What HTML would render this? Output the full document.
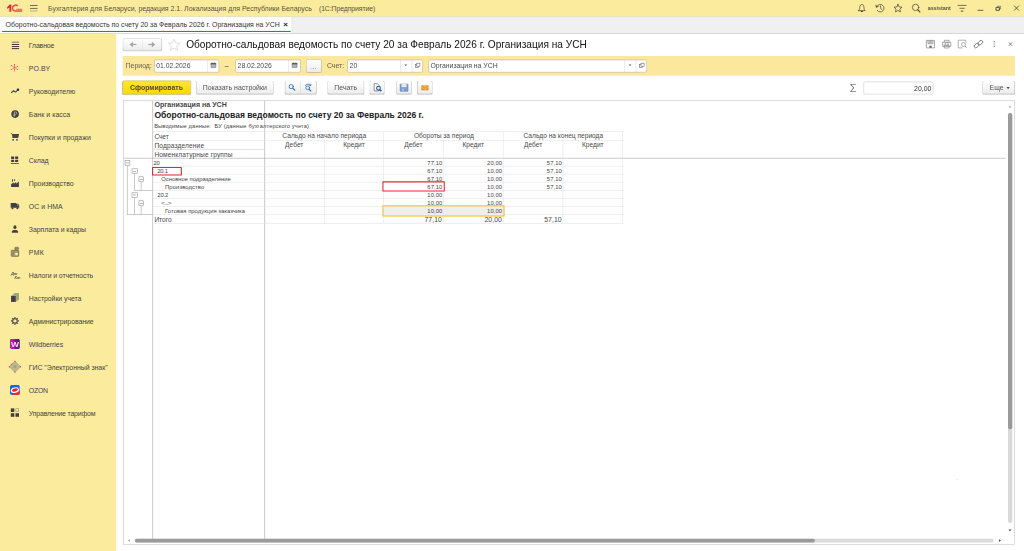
<!DOCTYPE html>
<html><head><meta charset="utf-8"><title>1C</title><style>
*{box-sizing:border-box;margin:0;padding:0}
html,body{width:1024px;height:551px;overflow:hidden;background:#fff}
#root{position:absolute;left:0;top:0;width:1920px;height:1034px;transform:scale(0.533333);transform-origin:0 0;font-family:"Liberation Sans",sans-serif;font-size:13px;color:#333;overflow:hidden}
.a{position:absolute;white-space:nowrap}
svg{position:absolute;overflow:visible}
.btn{border:1px solid #a2a2a2;border-bottom-color:#8e8e8e;border-radius:3px;background:linear-gradient(#ffffff,#ececec);box-shadow:0 1px 1px rgba(0,0,0,.22)}
.inp{border:1px solid #b3ab8c;border-radius:3px;background:#fff}
.sep{background:#d6d6d6}
.vl{background:#e1e1e1}
.hl{background:#e2e2e2}
.tl{background:#9a9a9a}
.tb{border:1px solid #8a8a8a;background:#fff}
</style></head><body><div id="root"><div class="a " style="left:0px;top:0px;width:1920px;height:31px;background:#FBEB9C"></div>
<div class="a" style="left:90px;top:7.77px;font-size:13px;line-height:17px;color:#5a5540;letter-spacing:0.019px;">Бухгалтерия для Беларуси, редакция 2.1. Локализация для Республики Беларусь</div>
<div class="a" style="left:598px;top:7.77px;font-size:13px;line-height:17px;color:#5a5540;letter-spacing:-0.217px;">(1С:Предприятие)</div>
<div class="a " style="left:0px;top:31px;width:1920px;height:32px;background:#f0f0f0;border-bottom:1px solid #bdbdbd;border-top:1px solid #d9d3ad"></div>
<div class="a " style="left:0px;top:32px;width:547.5px;height:30px;background:#fff;border-right:1px solid #d0d0d0"></div>
<div class="a " style="left:4px;top:58px;width:540.5px;height:2px;background:#0a9c4a"></div>
<div class="a" style="left:10.5px;top:37.77px;font-size:13px;line-height:17px;color:#333;">Оборотно-сальдовая ведомость по счету 20 за Февраль 2026 г. Организация на УСН</div>
<div class="a" style="left:531px;top:36.11px;font-size:15px;line-height:20px;color:#222;font-weight:bold;">×</div>
<div class="a " style="left:0px;top:64px;width:217.5px;height:971px;background:#FBEB9C"></div>
<div class="a" style="left:54px;top:76.59px;font-size:13px;line-height:17px;color:#454545;letter-spacing:-0.279px;">Главное</div>
<div class="a" style="left:54px;top:119.71px;font-size:13px;line-height:17px;color:#454545;letter-spacing:0.097px;">PO.BY</div>
<div class="a" style="left:54px;top:162.84px;font-size:13px;line-height:17px;color:#454545;letter-spacing:0.025px;">Руководителю</div>
<div class="a" style="left:54px;top:205.96px;font-size:13px;line-height:17px;color:#454545;letter-spacing:0.098px;">Банк и касса</div>
<div class="a" style="left:54px;top:249.09px;font-size:13px;line-height:17px;color:#454545;letter-spacing:0.055px;">Покупки и продажи</div>
<div class="a" style="left:54px;top:292.21px;font-size:13px;line-height:17px;color:#454545;letter-spacing:-0.172px;">Склад</div>
<div class="a" style="left:54px;top:335.34px;font-size:13px;line-height:17px;color:#454545;letter-spacing:-0.069px;">Производство</div>
<div class="a" style="left:54px;top:378.46px;font-size:13px;line-height:17px;color:#454545;letter-spacing:0.098px;">ОС и НМА</div>
<div class="a" style="left:54px;top:421.59px;font-size:13px;line-height:17px;color:#454545;letter-spacing:-0.089px;">Зарплата и кадры</div>
<div class="a" style="left:54px;top:464.71px;font-size:13px;line-height:17px;color:#454545;letter-spacing:0.599px;">РМК</div>
<div class="a" style="left:54px;top:507.84px;font-size:13px;line-height:17px;color:#454545;letter-spacing:-0.198px;">Налоги и отчетность</div>
<div class="a" style="left:54px;top:550.96px;font-size:13px;line-height:17px;color:#454545;letter-spacing:-0.132px;">Настройки учета</div>
<div class="a" style="left:54px;top:594.09px;font-size:13px;line-height:17px;color:#454545;letter-spacing:-0.154px;">Администрирование</div>
<div class="a" style="left:54px;top:637.21px;font-size:13px;line-height:17px;color:#454545;letter-spacing:-0.070px;">Wildberries</div>
<div class="a" style="left:54px;top:680.34px;font-size:13px;line-height:17px;color:#454545;letter-spacing:-0.070px;">ГИС "Электронный знак"</div>
<div class="a" style="left:54px;top:723.46px;font-size:13px;line-height:17px;color:#454545;letter-spacing:-0.455px;">OZON</div>
<div class="a" style="left:54px;top:766.59px;font-size:13px;line-height:17px;color:#454545;letter-spacing:-0.307px;">Управление тарифом</div>
<div class="a btn" style="left:230px;top:72px;width:73.5px;height:22.5px;"></div>
<div class="a sep" style="left:266.5px;top:73.5px;width:1.5px;height:19px;"></div>
<div class="a" style="left:349px;top:71.34px;font-size:19px;line-height:25px;color:#111;">Оборотно-сальдовая ведомость по счету 20 за Февраль 2026 г. Организация на УСН</div>
<div class="a " style="left:230px;top:104.5px;width:1672.5px;height:37.5px;background:#FBE89C"></div>
<div class="a" style="left:235.5px;top:115.40px;font-size:13px;line-height:17px;color:#66624e;">Период:</div>
<div class="a inp" style="left:289px;top:111.5px;width:122px;height:24.5px;"></div>
<div class="a sep" style="left:388px;top:113px;width:1px;height:21.5px;"></div>
<div class="a" style="left:293px;top:115.40px;font-size:12.8px;line-height:17px;color:#4a4a4a;">01.02.2026</div>
<div class="a" style="left:421.5px;top:114.65px;font-size:13px;line-height:17px;color:#333;">–</div>
<div class="a inp" style="left:441px;top:111.5px;width:122.5px;height:24.5px;"></div>
<div class="a sep" style="left:541px;top:113px;width:1px;height:21.5px;"></div>
<div class="a" style="left:445.5px;top:115.40px;font-size:12.8px;line-height:17px;color:#4a4a4a;">28.02.2026</div>
<div class="a btn" style="left:574px;top:111px;width:29px;height:25px;border:1px dotted #8f7f88"></div>
<div class="a" style="left:583px;top:117.27px;font-size:13px;line-height:17px;color:#8a8a8a;">...</div>
<div class="a" style="left:613px;top:115.40px;font-size:13px;line-height:17px;color:#66624e;">Счет:</div>
<div class="a inp" style="left:651px;top:111.5px;width:141.5px;height:24.5px;"></div>
<div class="a sep" style="left:750px;top:113px;width:1px;height:21.5px;"></div>
<div class="a sep" style="left:771.5px;top:113px;width:1px;height:21.5px;"></div>
<div class="a" style="left:655.5px;top:115.40px;font-size:12.8px;line-height:17px;color:#4a4a4a;">20</div>
<div class="a inp" style="left:803px;top:111.5px;width:410px;height:24.5px;"></div>
<div class="a sep" style="left:1170.5px;top:113px;width:1px;height:21.5px;"></div>
<div class="a sep" style="left:1191.5px;top:113px;width:1px;height:21.5px;"></div>
<div class="a" style="left:807px;top:115.40px;font-size:12.9px;line-height:17px;color:#4a4a4a;">Организация на УСН</div>
<div class="a " style="left:230px;top:151px;width:127.5px;height:26px;border:1px solid #c9a800;border-radius:3px;background:linear-gradient(#ffe72e,#fad800);box-shadow:0 1px 1.5px rgba(0,0,0,.3)"></div>
<div class="a" style="left:230px;top:156.09px;font-size:13px;line-height:17px;color:#54482a;font-weight:bold;width:127px;text-align:center;letter-spacing:0.014px;">Сформировать</div>
<div class="a btn" style="left:367.5px;top:151px;width:145.5px;height:26px;"></div>
<div class="a" style="left:367.5px;top:156.09px;font-size:13px;line-height:17px;color:#555;width:145.5px;text-align:center;">Показать настройки</div>
<div class="a btn" style="left:533.5px;top:151px;width:60px;height:26px;"></div>
<div class="a sep" style="left:563px;top:152.5px;width:1px;height:23px;"></div>
<div class="a btn" style="left:613.5px;top:151px;width:69.5px;height:26px;"></div>
<div class="a" style="left:613.5px;top:156.09px;font-size:13px;line-height:17px;color:#555;width:69.5px;text-align:center;">Печать</div>
<div class="a btn" style="left:692.5px;top:151px;width:28.5px;height:26px;"></div>
<div class="a btn" style="left:743px;top:151px;width:29px;height:26px;"></div>
<div class="a btn" style="left:782px;top:151px;width:29px;height:26px;"></div>
<div class="a" style="left:1593.5px;top:151.92px;font-size:20.5px;line-height:27px;color:#7a7a7a;">Σ</div>
<div class="a inp" style="left:1619px;top:153px;width:130.5px;height:24px;border-color:#c4c4c4"></div>
<div class="a" style="left:1619px;top:156.65px;font-size:13px;line-height:17px;color:#333;width:127.5px;text-align:right;">20,00</div>
<div class="a btn" style="left:1842px;top:151px;width:60.5px;height:26px;"></div>
<div class="a" style="left:1855.5px;top:156.27px;font-size:13px;line-height:17px;color:#555;">Еще</div>
<svg style="left:1887.19px;top:162.75px" width="6.38" height="4.50" viewBox="0 0 3.4 2.4"><path d="M0 0h3.4L1.7 2.2z" fill="#555"/></svg>
<div class="a " style="left:230.5px;top:188px;width:1672.5px;height:833px;border:1px solid #bdbdbd;background:#fff"></div>
<div class="a " style="left:285.5px;top:189px;width:1px;height:821.5px;background:#9c9c9c"></div>
<div class="a " style="left:495.5px;top:189px;width:1px;height:821.5px;background:#9c9c9c"></div>
<div class="a " style="left:232px;top:296px;width:1654px;height:1px;background:#9c9c9c"></div>
<div class="a" style="left:289.5px;top:188.34px;font-size:13.3px;line-height:17px;color:#484848;font-weight:bold;">Организация на УСН</div>
<div class="a" style="left:289.5px;top:205.12px;font-size:16px;line-height:21px;color:#222;font-weight:bold;">Оборотно-сальдовая ведомость по счету 20 за Февраль 2026 г.</div>
<div class="a" style="left:289px;top:229.37px;font-size:10.7px;line-height:14px;color:#444;letter-spacing:0.244px;">Выводимые данные:&nbsp; БУ (данные бухгалтерского учета)</div>
<div class="a hl" style="left:286.5px;top:246px;width:882px;height:1px;"></div>
<div class="a hl" style="left:286.5px;top:262.5px;width:882px;height:1px;"></div>
<div class="a hl" style="left:286.5px;top:279px;width:209px;height:1.5px;"></div>
<div class="a vl" style="left:608px;top:263px;width:1px;height:156px;"></div>
<div class="a vl" style="left:718.5px;top:246.5px;width:1px;height:172.5px;"></div>
<div class="a vl" style="left:830.5px;top:263px;width:1px;height:156px;"></div>
<div class="a vl" style="left:943px;top:246.5px;width:1px;height:172.5px;"></div>
<div class="a vl" style="left:1055px;top:263px;width:1px;height:156px;"></div>
<div class="a vl" style="left:1167px;top:246.5px;width:1px;height:172.5px;"></div>
<div class="a" style="left:289.5px;top:247.89px;font-size:12.4px;line-height:16px;color:#4a4a4a;letter-spacing:-0.178px;">Счет</div>
<div class="a" style="left:289.5px;top:265.14px;font-size:12.4px;line-height:16px;color:#4a4a4a;letter-spacing:0.235px;">Подразделение</div>
<div class="a" style="left:289.5px;top:282.02px;font-size:12.4px;line-height:16px;color:#4a4a4a;letter-spacing:0.210px;">Номенклатурные группы</div>
<div class="a" style="left:496.5px;top:246.58px;font-size:12.4px;line-height:16px;color:#4a4a4a;width:223px;text-align:center;">Сальдо на начало периода</div>
<div class="a" style="left:720px;top:246.58px;font-size:12.4px;line-height:16px;color:#4a4a4a;width:224.5px;text-align:center;">Обороты за период</div>
<div class="a" style="left:944px;top:246.58px;font-size:12.4px;line-height:16px;color:#4a4a4a;width:224.5px;text-align:center;">Сальдо на конец периода</div>
<div class="a" style="left:495.5px;top:264.21px;font-size:12.4px;line-height:16px;color:#4a4a4a;width:112.5px;text-align:center;">Дебет</div>
<div class="a" style="left:608.5px;top:264.21px;font-size:12.4px;line-height:16px;color:#4a4a4a;width:110.5px;text-align:center;">Кредит</div>
<div class="a" style="left:719px;top:264.21px;font-size:12.4px;line-height:16px;color:#4a4a4a;width:112px;text-align:center;">Дебет</div>
<div class="a" style="left:831px;top:264.21px;font-size:12.4px;line-height:16px;color:#4a4a4a;width:112.5px;text-align:center;">Кредит</div>
<div class="a" style="left:943.5px;top:264.21px;font-size:12.4px;line-height:16px;color:#4a4a4a;width:112px;text-align:center;">Дебет</div>
<div class="a" style="left:1055.5px;top:264.21px;font-size:12.4px;line-height:16px;color:#4a4a4a;width:112px;text-align:center;">Кредит</div>
<div class="a hl" style="left:286.5px;top:311px;width:882px;height:1px;"></div>
<div class="a hl" style="left:286.5px;top:326px;width:882px;height:1px;"></div>
<div class="a hl" style="left:286.5px;top:341px;width:882px;height:1px;"></div>
<div class="a hl" style="left:286.5px;top:356.5px;width:882px;height:1px;"></div>
<div class="a hl" style="left:286.5px;top:371.5px;width:882px;height:1px;"></div>
<div class="a hl" style="left:286.5px;top:386.5px;width:882px;height:1px;"></div>
<div class="a hl" style="left:286.5px;top:401.5px;width:882px;height:1px;"></div>
<div class="a hl" style="left:286.5px;top:418.5px;width:882px;height:1px;"></div>
<div class="a " style="left:717px;top:385px;width:229px;height:21px;background:#eeeeee;border:2px solid #f7c41c"></div>
<div class="a " style="left:717px;top:340px;width:116.5px;height:19px;border:2px solid #e6262e;border-radius:1px;background:#fff"></div>
<div class="a" style="left:288px;top:298.38px;font-size:11px;line-height:14px;color:#444;letter-spacing:-0.517px;">20</div>
<div class="a" style="left:719px;top:298.38px;font-size:11px;line-height:14px;color:#444;width:110.5px;text-align:right;letter-spacing:.15px;">77,10</div>
<div class="a" style="left:831px;top:298.38px;font-size:11px;line-height:14px;color:#444;width:110.5px;text-align:right;letter-spacing:.15px;">20,00</div>
<div class="a" style="left:943.5px;top:298.38px;font-size:11px;line-height:14px;color:#444;width:110px;text-align:right;letter-spacing:.15px;">57,10</div>
<div class="a" style="left:295px;top:313.38px;font-size:11px;line-height:14px;color:#444;letter-spacing:-0.512px;">20.1</div>
<div class="a" style="left:719px;top:313.38px;font-size:11px;line-height:14px;color:#444;width:110.5px;text-align:right;letter-spacing:.15px;">67,10</div>
<div class="a" style="left:831px;top:313.38px;font-size:11px;line-height:14px;color:#444;width:110.5px;text-align:right;letter-spacing:.15px;">10,00</div>
<div class="a" style="left:943.5px;top:313.38px;font-size:11px;line-height:14px;color:#444;width:110px;text-align:right;letter-spacing:.15px;">57,10</div>
<div class="a" style="left:302.5px;top:328.38px;font-size:11px;line-height:14px;color:#444;letter-spacing:-0.065px;">Основное подразделение</div>
<div class="a" style="left:719px;top:328.38px;font-size:11px;line-height:14px;color:#444;width:110.5px;text-align:right;letter-spacing:.15px;">67,10</div>
<div class="a" style="left:831px;top:328.38px;font-size:11px;line-height:14px;color:#444;width:110.5px;text-align:right;letter-spacing:.15px;">10,00</div>
<div class="a" style="left:943.5px;top:328.38px;font-size:11px;line-height:14px;color:#444;width:110px;text-align:right;letter-spacing:.15px;">57,10</div>
<div class="a" style="left:309.5px;top:343.38px;font-size:11px;line-height:14px;color:#444;letter-spacing:0.145px;">Производство</div>
<div class="a" style="left:719px;top:343.38px;font-size:11px;line-height:14px;color:#444;width:110.5px;text-align:right;letter-spacing:.15px;">67,10</div>
<div class="a" style="left:831px;top:343.38px;font-size:11px;line-height:14px;color:#444;width:110.5px;text-align:right;letter-spacing:.15px;">10,00</div>
<div class="a" style="left:943.5px;top:343.38px;font-size:11px;line-height:14px;color:#444;width:110px;text-align:right;letter-spacing:.15px;">57,10</div>
<div class="a" style="left:295px;top:358.56px;font-size:11px;line-height:14px;color:#444;letter-spacing:-0.324px;">20.2</div>
<div class="a" style="left:719px;top:358.56px;font-size:11px;line-height:14px;color:#444;width:110.5px;text-align:right;letter-spacing:.15px;">10,00</div>
<div class="a" style="left:831px;top:358.56px;font-size:11px;line-height:14px;color:#444;width:110.5px;text-align:right;letter-spacing:.15px;">10,00</div>
<div class="a" style="left:302.5px;top:373.56px;font-size:11px;line-height:14px;color:#444;letter-spacing:-0.723px;">&lt;...&gt;</div>
<div class="a" style="left:719px;top:373.56px;font-size:11px;line-height:14px;color:#444;width:110.5px;text-align:right;letter-spacing:.15px;">10,00</div>
<div class="a" style="left:831px;top:373.56px;font-size:11px;line-height:14px;color:#444;width:110.5px;text-align:right;letter-spacing:.15px;">10,00</div>
<div class="a" style="left:309.5px;top:388.56px;font-size:11px;line-height:14px;color:#444;letter-spacing:0.036px;">Готовая продукция заказчика</div>
<div class="a" style="left:719px;top:388.56px;font-size:11px;line-height:14px;color:#444;width:110.5px;text-align:right;letter-spacing:.15px;">10,00</div>
<div class="a" style="left:831px;top:388.56px;font-size:11px;line-height:14px;color:#444;width:110.5px;text-align:right;letter-spacing:.15px;">10,00</div>
<div class="a" style="left:289.5px;top:403.52px;font-size:12.4px;line-height:16px;color:#4a4a4a;letter-spacing:-0.062px;">Итого</div>
<div class="a" style="left:719px;top:403.02px;font-size:13px;line-height:17px;color:#4a4a4a;width:109.5px;text-align:right;">77,10</div>
<div class="a" style="left:831px;top:403.02px;font-size:13px;line-height:17px;color:#4a4a4a;width:110px;text-align:right;">20,00</div>
<div class="a" style="left:943.5px;top:403.02px;font-size:13px;line-height:17px;color:#4a4a4a;width:109.5px;text-align:right;">57,10</div>
<div class="a " style="left:284.5px;top:313px;width:56.5px;height:15.5px;border:2px solid #e6262e;border-radius:1px"></div>
<div class="a tl" style="left:238px;top:310.5px;width:1px;height:92px;"></div>
<div class="a tl" style="left:238.5px;top:401.5px;width:47.5px;height:1px;"></div>
<div class="a tl" style="left:251.5px;top:326px;width:1px;height:31px;"></div>
<div class="a tl" style="left:251.5px;top:356.5px;width:34.5px;height:1px;"></div>
<div class="a tl" style="left:264px;top:341px;width:1px;height:16px;"></div>
<div class="a tl" style="left:251.5px;top:370.5px;width:1px;height:31.5px;"></div>
<div class="a tl" style="left:264px;top:386px;width:1px;height:16px;"></div>
<div class="a tb" style="left:233.5px;top:300px;width:10.5px;height:10.5px;"></div>
<div class="a " style="left:235.5px;top:305px;width:6.5px;height:1px;background:#777"></div>
<div class="a tb" style="left:247px;top:315.5px;width:10.5px;height:10.5px;"></div>
<div class="a " style="left:249px;top:320.5px;width:6px;height:1px;background:#777"></div>
<div class="a tb" style="left:259.5px;top:330.5px;width:10.5px;height:10.5px;"></div>
<div class="a " style="left:261.5px;top:335.5px;width:6px;height:1px;background:#777"></div>
<div class="a tb" style="left:247px;top:360.5px;width:10.5px;height:10.5px;"></div>
<div class="a " style="left:249px;top:365px;width:6px;height:1px;background:#777"></div>
<div class="a tb" style="left:259.5px;top:375.5px;width:10.5px;height:10.5px;"></div>
<div class="a " style="left:261.5px;top:380.5px;width:6px;height:1px;background:#777"></div>
<div class="a " style="left:1792.5px;top:898.5px;width:2.5px;height:1px;background:#bbb"></div>
<div class="a " style="left:1890px;top:212px;width:7.5px;height:768.5px;background:#d9d9d9;border-radius:4px"></div>
<div class="a " style="left:1890px;top:212px;width:7.5px;height:593px;background:#9a9a9a;border-radius:4px"></div>
<svg style="left:1891.12px;top:197.62px" width="5.25" height="3.75" viewBox="0 0 2.8 2"><path d="M0 2h2.8L1.4 0z" fill="#aaa"/></svg>
<svg style="left:1891.12px;top:992.62px" width="5.25" height="3.75" viewBox="0 0 2.8 2"><path d="M0 0h2.8L1.4 2z" fill="#444"/></svg>
<div class="a " style="left:253px;top:1009.5px;width:1610px;height:7.5px;background:#d9d9d9;border-radius:4px"></div>
<div class="a " style="left:253px;top:1009.5px;width:1275px;height:7.5px;background:#9a9a9a;border-radius:4px"></div>
<svg style="left:240.00px;top:1010.62px" width="3.75" height="5.25" viewBox="0 0 2 2.8"><path d="M2 0v2.8L0 1.4z" fill="#aaa"/></svg>
<svg style="left:1873.12px;top:1010.62px" width="3.75" height="5.25" viewBox="0 0 2 2.8"><path d="M0 0v2.8L2 1.4z" fill="#444"/></svg>
<svg style="left:0;top:0" width="1920" height="1034" viewBox="0 0 1024 551.4667" fill="none" font-family="Liberation Sans, sans-serif">
<!-- 1C logo -->
<g id="logo1c">
<path d="M7.2 7.1 L9.7 4.6 H11.2 V11.8 H9.4 V7.4 L7.2 9z" fill="#e5262f"/>
<path d="M17.7 6.1 A3 3 0 1 0 15.4 11.1 H22.2" stroke="#ea4a52" stroke-width="1.5"/>
<path d="M16.4 9.3 H22.2" stroke="#e5262f" stroke-width="1" stroke-dasharray="1.1 .5"/>
</g>
<!-- hamburger -->
<path d="M30 5.5h7.6M30 8.45h7.6" stroke="#6d684f" stroke-width=".95"/>
<path d="M30 10.95h7.6" stroke="#a9ae8c" stroke-width=".95"/>
<!-- header right icons -->
<g stroke="#4c4a3c" stroke-width=".75" stroke-linejoin="round" stroke-linecap="round">
<path d="M858.5 10.6h6.7c-1-.8-1.25-1.7-1.25-3.3 0-1.7-.9-2.8-2.1-2.8s-2.1 1.1-2.1 2.8c0 1.6-.25 2.5-1.25 3.3z"/>
<path d="M861.2 11.5h1.3" stroke-width="1.1"/>
<path d="M876.9 6.5 A3.75 3.75 0 1 1 877.2 10.4"/>
<path d="M875.7 5.3l.4 2.3 2.1-.9z" fill="#4c4a3c" stroke-width=".3"/>
<path d="M880.4 5.9v2.4l1.5 1"/>
<path d="M898 4.3l1.2 2.6 2.8.3-2.1 1.9.6 2.8-2.5-1.4-2.5 1.4.6-2.8-2.1-1.9 2.8-.3z"/>
<circle cx="915.6" cy="7.4" r="3.2"/>
<path d="M917.9 9.8l2 2.1" stroke-width="1.2"/>
<path d="M958 5.4h8.1M959.8 8.3h4.5"/>
<path d="M961.2 11.1h1.7" stroke-width="1"/>
<path d="M978 10.3h4.9" stroke-width=".85"/>
<path d="M996.4 7.4h3v2.9h-3z" stroke-width=".95" stroke-linejoin="miter"/>
<path d="M997.7 6.9v-.7h2.9v2.7h-.7" stroke-width=".55" stroke-linejoin="miter"/>
<path d="M1014.3 5.9l4.4 4.4M1018.7 5.9l-4.4 4.4" stroke-width=".85"/>
</g>
<text x="927.7" y="10" font-size="5.35" font-weight="bold" fill="#57523f">assistant</text>

<!-- ===== sidebar icons ===== -->
<!-- Главное -->
<path d="M11.8 42.2h7.3" stroke="#6c695c" stroke-width=".9"/>
<path d="M11.8 44.5h7.3M11.8 46.55h7.3M11.8 48.6h7.3" stroke="#3d3a4a" stroke-width="1"/>
<!-- PO.BY -->
<g stroke="#ee5a66" stroke-width=".75" fill="#ee4a5c">
<path d="M14.5 64.2v7.6M11.3 65.5l6.3 3.9M17.6 66.4l-6.3 3.1" stroke-opacity=".75"/>
<circle cx="14.5" cy="64.6" r=".55" stroke="none"/><circle cx="11.3" cy="65.5" r=".6" stroke="none"/><circle cx="17.6" cy="66.5" r=".6" stroke="none"/>
<circle cx="11.3" cy="69.5" r=".6" stroke="none"/><circle cx="17.6" cy="69.5" r=".6" stroke="none"/><circle cx="14.5" cy="67.3" r=".7" stroke="none"/><circle cx="14.5" cy="69.6" r=".5" stroke="none"/>
</g>
<!-- Руководителю -->
<path d="M11.2 92.7l2.5-2 1.9 1.4 2.3-2.2" stroke="#45434e" stroke-width="1.15"/>
<rect x="16.9" y="88.6" width="2.2" height="2.2" fill="#2f2e44"/>
<!-- Банк и касса -->
<circle cx="15.1" cy="114.1" r="3.8" fill="#413f4c"/>
<path d="M14.3 116.6v-4.6h1.3a1.15 1.15 0 0 1 0 2.3h-2.1M13.5 115.4h2" stroke="#c9c39a" stroke-width=".7"/>
<!-- Покупки -->
<path d="M10.9 133.2l1.1.9" stroke="#45434e" stroke-width=".8"/>
<path d="M11.9 134.1h7.2l-.9 4h-5.7z" fill="#45434e"/>
<rect x="12.4" y="139" width="1.5" height="1.6" fill="#45434e"/><rect x="16.2" y="139" width="1.5" height="1.6" fill="#45434e"/>
<!-- Склад -->
<g fill="#413f4c"><rect x="11.1" y="156.4" width="3.1" height="2.5" rx=".4"/><rect x="15.1" y="156.4" width="3.1" height="2.5" rx=".4"/><rect x="11.1" y="159.7" width="3.1" height="2.4" rx=".4"/><rect x="15.1" y="159.7" width="3.1" height="2.4" rx=".4"/><rect x="10.7" y="163" width="8" height=".8"/></g>
<!-- Производство -->
<path d="M11.1 186.9v-2.7l2.7-2v1.6l2.4-1.8v1.7l2.7-2.2v5.4z" fill="#413f4c"/>
<rect x="12" y="179.3" width="1" height="2.3" fill="#413f4c"/><rect x="14" y="179.3" width="1" height="1.5" fill="#413f4c"/>
<!-- ОС и НМА -->
<path d="M10.7 203.1h5.6v.7h1.9l1 1.3v2.7h-8.5z" fill="#413f4c"/>
<rect x="17.2" y="204.5" width="1.3" height="1" fill="#d8d2a6"/>
<circle cx="12.5" cy="208.3" r="1" fill="#413f4c"/><circle cx="17.4" cy="208.3" r="1" fill="#413f4c"/>
<!-- Зарплата -->
<ellipse cx="14.95" cy="227.2" rx="1.5" ry="1.9" fill="#413f4c"/>
<path d="M11.8 232.8v-1.1c0-1.2 1.3-1.8 3.15-1.8s3.15.6 3.15 1.8v1.1z" fill="#413f4c"/>
<!-- РМК -->
<rect x="11.3" y="250.3" width="7.4" height="6" rx=".6" fill="#a39d72" stroke="#7a5c3c" stroke-width=".75"/>
<rect x="15.2" y="253" width="2.6" height="2.2" fill="#f6efbc"/>
<rect x="14.8" y="247.2" width="3.8" height="2.6" rx=".8" fill="#8c8a6c" stroke="#6a5a44" stroke-width=".5"/>
<path d="M13 255l1.2-3.4" stroke="#7a5c3c" stroke-width=".5"/>
<!-- Налоги -->
<text x="10.9" y="274.9" font-size="4.1" font-weight="bold" font-style="italic" fill="#55534c">Дт</text>
<text x="14.6" y="279.1" font-size="3.9" font-weight="bold" font-style="italic" fill="#55534c">Кт</text>
<!-- Настройки учета -->
<path d="M11.1 296l3.6-3h4.3v6.4l-3.3 2.5h-4.6z" fill="#a3a47c"/>
<rect x="11.1" y="296" width="4.6" height="5.9" fill="#433f48"/>
<!-- Администрирование -->
<g transform="translate(14.95 320.9)">
<circle r="2.3" stroke="#4b4a5c" stroke-width="1.15"/>
<g stroke="#4b4a5c" stroke-width="1.1"><path d="M0 -4v1.2M0 4v-1.2M-4 0h1.2M4 0h-1.2M-2.83 -2.83l.85 .85M2.83 2.83l-.85 -.85M-2.83 2.83l.85 -.85M2.83 -2.83l-.85 .85"/></g>
</g>
<!-- Wildberries -->
<defs><linearGradient id="wb" x1="0" x2="1"><stop offset="0" stop-color="#c81ab6"/><stop offset=".45" stop-color="#b010a8"/><stop offset=".55" stop-color="#7a1290"/><stop offset="1" stop-color="#6a1288"/></linearGradient></defs>
<rect x="10" y="339" width="9.8" height="9.9" rx="1.4" fill="url(#wb)"/>
<text x="10.9" y="346.6" font-size="7.2" font-weight="bold" fill="#f4e0f2" textLength="8" lengthAdjust="spacingAndGlyphs">W</text>
<!-- ГИС -->
<path d="M14.95 361.3l5.6 5.4-5.6 5.6-5.6-5.6z" fill="#b4c29c" stroke="#e08a58" stroke-width=".75"/>
<path d="M12.6 366.7h4.7M14.95 364.3v4.8M13.3 365l3.3 3.4M16.6 365l-3.3 3.4" stroke="#8d9c7a" stroke-width=".5"/>
<g fill="#f04a62"><circle cx="14.95" cy="361.4" r=".75"/><circle cx="20.4" cy="366.7" r=".7"/><circle cx="14.95" cy="372" r=".7"/><circle cx="9.5" cy="366.7" r=".7"/><circle cx="12.3" cy="363.6" r=".55"/><circle cx="11.3" cy="364.6" r=".55"/></g>
<!-- OZON -->
<clipPath id="oz"><rect x="10" y="385" width="9.8" height="9.9" rx="1.7"/></clipPath>
<g clip-path="url(#oz)"><rect x="10" y="385" width="9.8" height="9.9" fill="#0f62ff"/>
<path d="M11.5 395l8.5-4.5v4.5z" fill="#f0283c"/>
<ellipse cx="14.9" cy="390.2" rx="4.2" ry="2.7" transform="rotate(-14 14.9 390.2)" fill="#fff"/>
<ellipse cx="14.9" cy="390" rx="3" ry="1.55" transform="rotate(-14 14.9 390)" fill="#ee2030"/></g>
<!-- Управление тарифом -->
<g fill="#3f3d4a"><rect x="10.8" y="408.4" width="3.5" height="3.6"/><rect x="10.8" y="413.2" width="3.5" height="3.6"/><rect x="15.5" y="413.2" width="3.5" height="3.6"/></g>
<rect x="15.85" y="408.75" width="2.9" height="2.9" fill="#f3ecb4" stroke="#9a8a5c" stroke-width=".6"/>

<!-- ===== form icons ===== -->
<g stroke="#a4a4a4" stroke-width="1.2" fill="#a4a4a4"><path d="M131.5 44.5h4.9"/><path d="M148.4 44.5h4.9"/><path d="M132.8 41.9v5.2l-3.1-2.6z" stroke-width=".3"/><path d="M152 41.9v5.2l3.1-2.6z" stroke-width=".3"/></g>
<path d="M174.1 39.2l1.75 3.7 4 .45-3 2.75.85 4-3.6-2.05-3.6 2.05.85-4-3-2.75 4-.45z" stroke="#cfcfcf" stroke-width=".7" stroke-linejoin="round"/>
<!-- calendar icons -->
<g id="cal"><rect x="211" y="63.3" width="4.8" height="4.3" rx=".5" fill="#b4b4b4" stroke="#747474" stroke-width=".65"/><rect x="210.7" y="63" width="5.4" height="1.4" fill="#5e5e5e"/><path d="M212.2 62.4v.9M214.6 62.4v.9" stroke="#5c5c5c" stroke-width=".6"/></g>
<g transform="translate(81.2 0)"><rect x="211" y="63.3" width="4.8" height="4.3" rx=".5" fill="#b4b4b4" stroke="#747474" stroke-width=".65"/><rect x="210.7" y="63" width="5.4" height="1.4" fill="#5e5e5e"/><path d="M212.2 62.4v.9M214.6 62.4v.9" stroke="#5c5c5c" stroke-width=".6"/></g>
<!-- dropdown arrows + open icons -->
<g id="dd"><path d="M404.4 64.6h2.7l-1.35 1.5z" fill="#5a4a5c"/></g><g transform="translate(224.3 0)"><path d="M404.4 64.6h2.7l-1.35 1.5z" fill="#5a4a5c"/></g>
<g id="opn" stroke="#666" stroke-width=".6"><rect x="415.3" y="64.6" width="3.1" height="3" fill="#fff"/><rect x="416.8" y="63.2" width="3.1" height="3" fill="#fff"/></g><g transform="translate(224.2 0)" stroke="#666" stroke-width=".6"><rect x="415.3" y="64.6" width="3.1" height="3" fill="#fff"/><rect x="416.8" y="63.2" width="3.1" height="3" fill="#fff"/></g>
<!-- toolbar: search -->
<g stroke="#2e6cb3" stroke-linecap="round"><circle cx="291.2" cy="86.6" r="2.1" stroke-width=".85"/><path d="M292.9 88.3l1.9 1.9" stroke-width="1.2"/>
<circle cx="307.7" cy="87.8" r="1.9" stroke-width=".85"/><path d="M309.2 89.4l1.6 1.6" stroke-width="1.1"/><path d="M305.2 85.6a3.4 3.4 0 0 1 5.6 -.3" stroke-width=".8"/><path d="M310.9 84.2v1.3h-1.3" stroke-width=".7"/></g>
<!-- preview -->
<path d="M374.2 83.7h3.3l1.6 1.6v5.6h-4.9z" fill="#fff" stroke="#5c5c5c" stroke-width=".65"/>
<circle cx="378.5" cy="88.2" r="1.9" stroke="#2a5a9c" stroke-width="1.1" fill="#e8eef6"/><path d="M379.9 89.7l1.5 1.6" stroke="#2a5a9c" stroke-width="1.4"/>
<!-- save -->
<rect x="400" y="83.9" width="8.1" height="7.5" rx=".6" fill="#7b9bcb" stroke="#6283b6" stroke-width=".4"/><rect x="401.5" y="84" width="5.1" height="3.2" fill="#e4e9f1"/><rect x="401.9" y="88.7" width="4.3" height="2.7" fill="#a9bbd6"/><rect x="404.5" y="89.1" width="1.1" height="1.9" fill="#4f72a8"/>
<!-- mail -->
<rect x="421.5" y="85.6" width="6.9" height="4.4" rx=".5" fill="#f2b844" stroke="#d89a2a" stroke-width=".5"/><path d="M421.6 85.8l3.3 2.4 3.3-2.4M421.6 89.5l2.3-1.8M428.2 89.5l-2.3-1.8" stroke="#b87820" stroke-width=".5"/><path d="M421.6 89.9h6.6" stroke="#c2562a" stroke-width=".5" stroke-dasharray=".8 .6"/>
<!-- form right icons -->
<g stroke="#7a7a7a" stroke-width=".65" stroke-linejoin="round">
<path d="M926.4 40.4h8.1v7.5h-8.1z"/><path d="M928 40.5v3.2h4.9v-3.2M929.3 40.6v2.4M930.5 40.6v2.4M931.7 40.6v2.4"/><rect x="929.4" y="45.7" width="2.3" height="2.1" fill="#7a5a78" stroke="none"/>
<path d="M944.3 42.3v-2h4.8v2M942.6 42.3h8.2v4h-8.2zM944.3 45.2h4.8v2.8h-4.8z"/><circle cx="946.7" cy="44" r="1.6"/>
<path d="M965.9 42.8v-2.6h-7.7v7.7h4" stroke-width=".6"/><circle cx="963.4" cy="44.5" r="1.9" stroke-width=".6"/><path d="M964.8 46l1.5 1.6" stroke-width=".9"/>
<g transform="translate(978.4 44.1) rotate(-38)" stroke="#686868" stroke-width=".8"><rect x="-5" y="-1.6" width="5.2" height="3.2" rx="1.6"/><rect x="-.2" y="-1.6" width="5.2" height="3.2" rx="1.6"/></g>
</g>
<g fill="#5a5a5a"><circle cx="994.2" cy="41.7" r=".62"/><circle cx="994.2" cy="44" r=".62"/><circle cx="994.2" cy="46.3" r=".62"/></g>
<path d="M1008.8 42.5l3.3 3.3M1012.1 42.5l-3.3 3.3" stroke="#777" stroke-width=".95"/>
</svg>
</div></body></html>
